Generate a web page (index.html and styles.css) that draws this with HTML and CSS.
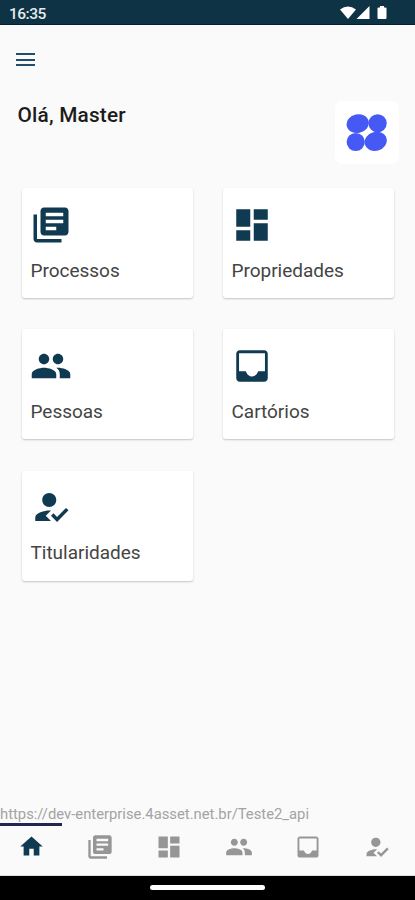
FILE: index.html
```html
<!DOCTYPE html>
<html lang="pt-BR">
<head>
<meta charset="utf-8">
<title>Início</title>
<link rel="stylesheet" href="styles.css">
</head>
<body>
<svg class="defs" aria-hidden="true">
  <symbol id="books" viewBox="0 0 24 24"><path d="M4 6H2v14c0 1.1.9 2 2 2h14v-2H4V6zm16-4H8c-1.1 0-2 .9-2 2v12c0 1.1.9 2 2 2h12c1.1 0 2-.9 2-2V4c0-1.1-.9-2-2-2zm-1 9H9V9h10v2zm-4 4H9v-2h6v2zm4-8H9V5h10v2z"/></symbol>
  <symbol id="dash" viewBox="0 0 24 24"><path d="M3 13h8V3H3v10zm0 8h8v-6H3v6zm10 0h8V11h-8v10zm0-18v6h8V3h-8z"/></symbol>
  <symbol id="people" viewBox="0 0 24 24"><path d="M16 11c1.66 0 2.99-1.34 2.99-3S17.66 5 16 5s-3 1.34-3 3 1.34 3 3 3zm-8 0c1.66 0 2.99-1.34 2.99-3S9.66 5 8 5 5 6.34 5 8s1.34 3 3 3zm0 2c-2.33 0-7 1.17-7 3.5V19h14v-2.5c0-2.33-4.67-3.5-7-3.5zm8 0c-.29 0-.62.02-.97.05 1.16.84 1.97 1.97 1.97 3.45V19h6v-2.5c0-2.33-4.67-3.5-7-3.5z"/></symbol>
  <symbol id="inbox" viewBox="0 0 24 24"><path d="M19 3H5c-1.1 0-2 .9-2 2v14c0 1.100.9 2 2 2h14c1.100 0 2-.9 2-2V5c0-1.100-.9-2-2-2zm.4 12H15.500c-.5 1.660-1.850 3-3.500 3s-3-1.340-3.500-3H4.600V4.700h14.800z"/></symbol>
  <symbol id="person" viewBox="0 0 24 24"><path d="M9 17l3-2.940c-.39-.04-.68-.06-1-.06-2.670 0-8 1.340-8 4v2h9l-3-3zm2-5c2.210 0 4-1.790 4-4s-1.790-4-4-4-4 1.790-4 4 1.790 4 4 4zm4.470 8.500L12 17l1.400-1.410 2.070 2.080 5.130-5.170 1.400 1.410z"/></symbol>
  <symbol id="home" viewBox="0 0 24 24"><path d="M10 20v-6h4v6h5v-8h3L12 3 2 12h3v8z"/></symbol>
</svg>
<div class="screen">
  <header class="status">
    <span>16:35</span>
    <svg width="50" height="16" viewBox="0 0 50 16"><path d="M0 4.500Q8 -1.500 16 4.500L8 14z"/><path d="M29.500 1v13h-13z"/><path d="M40 1h4v1.500h1.500q1 0 1 1V13q0 1-1 1h-7q-1 0-1-1V3.500q0-1 1-1H40z"/></svg>
  </header>
  <main>
    <button class="menu" aria-label="Menu"><i></i><i></i><i></i></button>
    <div class="greeting">
      <h1>Olá, Master</h1>
      <div class="logo"><svg width="42" height="40" viewBox="0 0 42 40"><ellipse cx="11.700" cy="10.600" rx="11.200" ry="9.300" transform="rotate(-12 11.700 10.600)"/><circle cx="31.600" cy="10.300" r="9.100"/><circle cx="9.700" cy="29" r="9.100"/><ellipse cx="29.700" cy="28.400" rx="11.200" ry="9.500" transform="rotate(-15 29.700 28.400)"/></svg></div>
    </div>
    <section class="cards">
      <a class="card"><svg><use href="#books"/></svg><span>Processos</span></a>
      <a class="card"><svg><use href="#dash"/></svg><span>Propriedades</span></a>
      <a class="card"><svg><use href="#people"/></svg><span>Pessoas</span></a>
      <a class="card"><svg><use href="#inbox"/></svg><span>Cartórios</span></a>
      <a class="card"><svg><use href="#person"/></svg><span>Titularidades</span></a>
    </section>
    <p class="url">https://dev-enterprise.4asset.net.br/Teste2_api</p>
  </main>
  <nav class="tabs">
    <a class="active"><svg><use href="#home"/></svg></a>
    <a><svg><use href="#books"/></svg></a>
    <a><svg><use href="#dash"/></svg></a>
    <a><svg><use href="#people"/></svg></a>
    <a><svg><use href="#inbox"/></svg></a>
    <a><svg><use href="#person"/></svg></a>
  </nav>
  <footer class="system"><i></i></footer>
</div>
</body>
</html>
```
FILE: styles.css
```css
* { box-sizing: border-box; }
body { margin: 0; font-family: Roboto, "Liberation Sans", sans-serif; background: #fafafa; }
.defs { display: none; }
.screen { width: 415px; height: 900px; display: flex; flex-direction: column; overflow: hidden; }
.status { height: 25px; flex: none; background: #0e3344; border-bottom: 1px solid #0b1c35; color: #e6eaed; display: flex; justify-content: space-between; align-items: center; padding: 3px 25.500px 0 9px; font-size: 15.500px; font-weight: 500; letter-spacing: -.5px; }
.status svg { fill: #fff; margin-top: -1px; }
main { flex: 1; min-height: 0; display: flex; flex-direction: column; }
.menu { border: 0; background: none; padding: 0; margin: 28px 0 0 16px; width: 19px; height: 13px; display: flex; flex-direction: column; justify-content: space-between; flex: none; }
.menu i { height: 2px; width: 19px; background: #214e69; }
.greeting { display: flex; justify-content: space-between; margin: 35px 16px 0 17.500px; height: 63px; flex: none; }
h1 { margin: 2px 0 0; font-size: 20.800px; line-height: 24px; font-weight: 500; color: #1c1c1c; letter-spacing: .2px; }
.logo { width: 64px; height: 63px; background: #fff; border-radius: 7px; display: flex; align-items: center; justify-content: center; padding-top: 1px; }
.logo svg { fill: #4759f5; }
.cards { display: grid; grid-template-columns: 171px 171px; grid-auto-rows: 110px; column-gap: 30px; row-gap: 31.300px; margin: 24px 0 0 22px; }
.card { background: #fff; border-radius: 3px; box-shadow: 0 1px 2px rgba(0,0,0,.22); padding: 15.500px 8.500px; display: flex; flex-direction: column; }
.card svg { width: 42px; height: 42px; fill: #0f3a52; flex: none; margin-left: -1px; }
.card span { margin-top: 13px; font-size: 19px; line-height: 24px; color: #444; letter-spacing: -.02px; }
.url { margin: auto 0 0; font-size: 14.800px; line-height: 17px; color: #a3a3a3; }
.tabs { height: 53px; flex: none; display: grid; grid-template-columns: repeat(6, 1fr); border-bottom: 1px solid #ddd; }
.tabs a { display: flex; justify-content: center; padding: 8px 7px 0 0; border-top: 3px solid transparent; }
.tabs svg { width: 28px; height: 28px; fill: #969696; margin-top: -1px; flex: none; }
.tabs .active { border-color: #252553; margin-right: 7px; padding-right: 0; }
.tabs .active svg { width: 27px; height: 27px; fill: #0f3a52; }
.system { height: 24px; flex: none; background: #000; display: flex; justify-content: center; padding-top: 9px; }
.system i { width: 115px; height: 5px; border-radius: 3px; background: #fff; }
```
